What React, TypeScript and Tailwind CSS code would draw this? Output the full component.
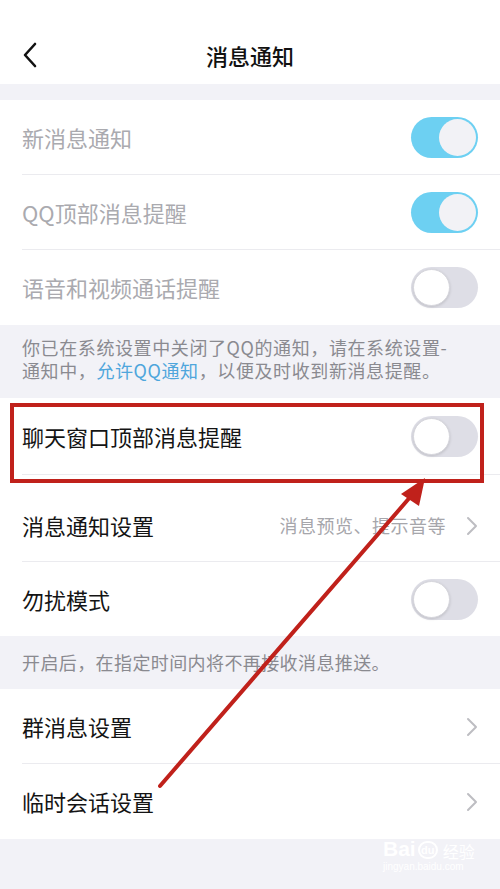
const FONT = { fontFamily: '"Noto Sans CJK SC", "Noto Sans", sans-serif' }

const Toggle = ({ on }: { on: boolean }) => (
  <div
    className={`w-[67px] h-[41px] rounded-full flex items-center px-[2px] ${
      on ? 'bg-[#6dd0f2] justify-end' : 'bg-[#dedee6] justify-start'
    }`}
  >
    <div
      className={`w-[37px] h-[37px] rounded-full ${
        on ? 'bg-[#f2f2f6]' : 'bg-white border border-[#d6d6dc] shadow-[0_1px_3px_rgba(0,0,0,0.15)]'
      }`}
    />
  </div>
)

const Chevron = () => (
  <svg width="12" height="20" viewBox="0 0 12 20" fill="none">
    <path d="M2 2l8 8-8 8" stroke="#bdbdc2" strokeWidth="2" strokeLinecap="round" strokeLinejoin="round" />
  </svg>
)

const Row = ({ label, muted, right, h = 'h-[75px]', divider = true }) => (
  <div className={`relative flex items-center pl-[22px] pr-[22px] ${h}`}>
    <div className={`grow text-[22px] ${muted ? 'text-[#aaaaaf]' : 'text-[#141414]'}`}>{label}</div>
    {right}
    {divider && <div className="absolute left-[22px] right-0 bottom-0 h-px bg-[#ebebef]" />}
  </div>
)

export default function App() {
  return (
    <div style={FONT} className="relative w-[500px] h-[889px] bg-[#f2f2f7] overflow-hidden">
      {/* header */}
      <div className="h-[84px] bg-white pt-[26px] grid grid-cols-[80px_1fr_80px] items-center">
        <div className="pl-[22px] h-[58px] flex items-center">
          <svg width="16" height="26" viewBox="0 0 16 26" fill="none">
            <path d="M13 2L3 13l10 11" stroke="#111" strokeWidth="2.6" strokeLinecap="round" strokeLinejoin="round" />
          </svg>
        </div>
        <div className="text-center text-[22px] text-[#111] font-medium">消息通知</div>
        <div />
      </div>

      <div className="h-[16px]" />

      <div className="bg-white">
        <Row label="新消息通知" muted right={<Toggle on />} />
        <Row label="QQ顶部消息提醒" muted right={<Toggle on />} />
        <Row label="语音和视频通话提醒" muted right={<Toggle on={false} />} divider={false} />
      </div>

      <div className="h-[73px] pl-[22px] pt-[11px] text-[18px] leading-[23px] tracking-[0.6px] text-[#8a8a90] whitespace-nowrap">
        你已在系统设置中关闭了QQ的通知，请在系统设置-
        <br />
        通知中，<span className="text-[#4fa6dc]">允许QQ通知</span>，以便及时收到新消息提醒。
      </div>

      <div className="bg-white">
        <Row label="聊天窗口顶部消息提醒" h="h-[77px]" right={<Toggle on={false} />} />
        <Row
          label="消息通知设置"
          h="h-[87px] pt-[14px]"
          right={
            <div className="flex items-center gap-[20px]">
              <span className="text-[18px] tracking-[0.5px] text-[#a6a6ab]">消息预览、提示音等</span>
              <Chevron />
            </div>
          }
        />
        <Row label="勿扰模式" h="h-[74px]" right={<Toggle on={false} />} divider={false} />
      </div>

      <div className="h-[53px] px-[22px] flex items-center text-[18px] tracking-[0.4px] text-[#8a8a90]">
        开启后，在指定时间内将不再接收消息推送。
      </div>

      <div className="bg-white">
        <Row label="群消息设置" right={<Chevron />} />
        <Row label="临时会话设置" right={<Chevron />} divider={false} />
      </div>

      {/* watermark */}
      <div className="absolute left-[383px] top-[838px] flex flex-col items-start">
        <div className="flex items-end text-white leading-none">
          <span className="text-[21px] font-bold" style={{ fontFamily: '"Liberation Sans", sans-serif' }}>Bai</span>
          <span className="w-[20px] h-[18px] rounded-full border-2 border-white text-[11px] font-bold flex items-center justify-center mx-[2px]" style={{ fontFamily: '"Liberation Sans", sans-serif' }}>du</span>
          <span className="text-[16px] ml-[3px]">经验</span>
        </div>
        <div className="text-[10px] text-white mt-[3px] leading-none" style={{ fontFamily: '"Liberation Sans", sans-serif' }}>jingyan.baidu.com</div>
      </div>

      {/* annotation: red box */}
      <div className="absolute left-[10px] top-[403px] w-[474px] h-[80px] border-[4px] border-[#c0211b]" />

      {/* annotation: arrow */}
      <svg className="absolute inset-0" width="500" height="889" viewBox="0 0 500 889">
        <line x1="160" y1="786" x2="418" y2="488" stroke="#c0211b" strokeWidth="4" strokeLinecap="round" />
        <polygon points="425,478 401,494 419,506" fill="#c0211b" />
      </svg>
    </div>
  )
}
